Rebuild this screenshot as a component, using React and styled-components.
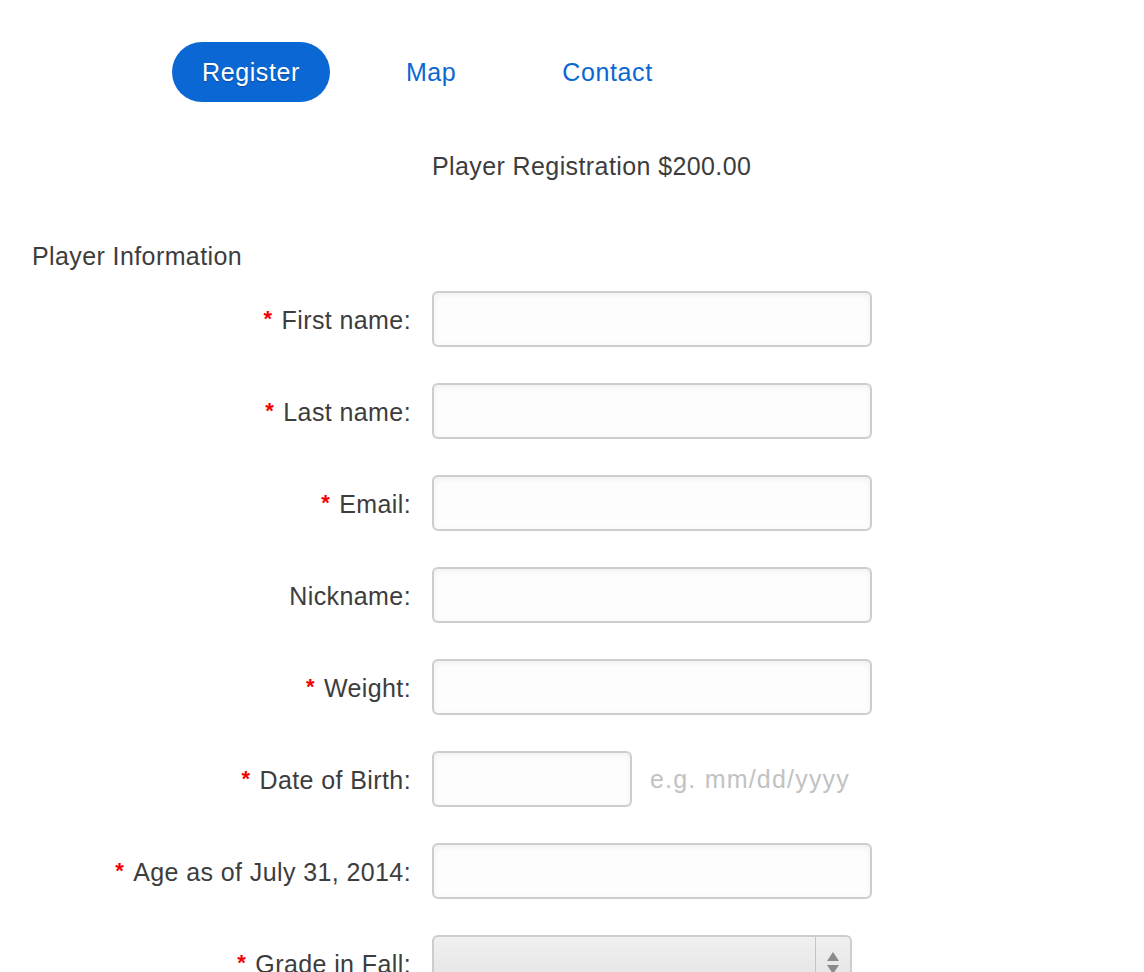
import styled, { createGlobalStyle } from 'styled-components';

const Global = createGlobalStyle`
  body {
    margin: 0;
    background: #fff;
    font-family: "Liberation Sans", Arial, sans-serif;
    color: #3d3d3d;
  }
`

const Page = styled.div`
  width: 1144px;
  height: 972px;
  overflow: hidden;
  font-size: 25px;
  letter-spacing: 0.4px;
`

const Nav = styled.nav`
  display: flex;
  gap: 46px;
  padding: 42px 0 0 172px;
`

const NavItem = styled.a`
  display: flex;
  align-items: center;
  height: 60px;
  padding: 0 30px;
  border-radius: 30px;
  text-decoration: none;
  letter-spacing: 0.6px;
  color: ${p => (p.active ? '#fff' : '#0b67d3')};
  background: ${p => (p.active ? '#0b67d3' : 'transparent')};
  text-shadow: ${p => (p.active ? '0 1px 1px rgba(0,0,0,0.25)' : 'none')};
`

const Form = styled.div`
  display: grid;
  grid-template-columns: 411px 440px;
  column-gap: 21px;
  align-items: center;
`

const Title = styled.div`
  grid-column: 2;
  margin-top: 49px;
  height: 30px;
  line-height: 30px;
  white-space: nowrap;
`

const Section = styled.div`
  grid-column: 1 / span 2;
  padding-left: 32px;
  margin-top: 60px;
  margin-bottom: 20px;
  height: 30px;
  line-height: 30px;
`

const Label = styled.label`
  text-align: right;
  white-space: nowrap;
  margin-bottom: 34px;
`

const Star = styled.span`
  color: #f00000;
  font-size: 22px;
  font-weight: bold;
  margin-right: 9px;
  vertical-align: 3px;
`

const Field = styled.div`
  display: flex;
  align-items: center;
  gap: 18px;
  margin-bottom: 36px;
`

const Input = styled.input`
  box-sizing: border-box;
  width: ${p => p.$w || 440}px;
  height: 56px;
  border: 2px solid #cdcdcd;
  border-radius: 6px;
  background: #fdfdfd;
  box-shadow: inset 0 2px 6px rgba(0, 0, 0, 0.06);
  outline: none;
`

const Hint = styled.span`
  color: #c2c2c2;
  letter-spacing: 1.2px;
`

const Select = styled.div`
  box-sizing: border-box;
  width: 420px;
  height: 56px;
  border: 2px solid #cdcdcd;
  border-radius: 6px;
  background: linear-gradient(#f0f0f0, #e2e2e2);
  display: flex;
  justify-content: flex-end;
`

const Arrows = styled.div`
  width: 34px;
  border-left: 1px solid #c4c4c4;
  display: flex;
  flex-direction: column;
  align-items: center;
  justify-content: center;
  gap: 4px;
`

const Tri = styled.span`
  width: 0;
  height: 0;
  border-left: 6px solid transparent;
  border-right: 6px solid transparent;
  ${p => (p.down ? 'border-top: 9px solid #8a8a8a;' : 'border-bottom: 9px solid #8a8a8a;')}
`

const rows = [
  { label: 'First name:', req: true },
  { label: 'Last name:', req: true },
  { label: 'Email:', req: true },
  { label: 'Nickname:', req: false },
  { label: 'Weight:', req: true },
]

const App = () => {
  return (
    <Page>
      <Global />
      <Nav>
        <NavItem active href="#">Register</NavItem>
        <NavItem href="#">Map</NavItem>
        <NavItem href="#">Contact</NavItem>
      </Nav>
      <Form>
        <Title>Player Registration $200.00</Title>
        <Section>Player Information</Section>
        {rows.map(r => (
          <>
            <Label key={r.label}>{r.req && <Star>*</Star>}{r.label}</Label>
            <Field><Input /></Field>
          </>
        ))}
        <Label><Star>*</Star>Date of Birth:</Label>
        <Field>
          <Input $w={200} />
          <Hint>e.g. mm/dd/yyyy</Hint>
        </Field>
        <Label><Star>*</Star>Age as of July 31, 2014:</Label>
        <Field><Input /></Field>
        <Label><Star>*</Star>Grade in Fall:</Label>
        <Field>
          <Select>
            <Arrows><Tri /><Tri down /></Arrows>
          </Select>
        </Field>
      </Form>
    </Page>
  )
}

export default App
